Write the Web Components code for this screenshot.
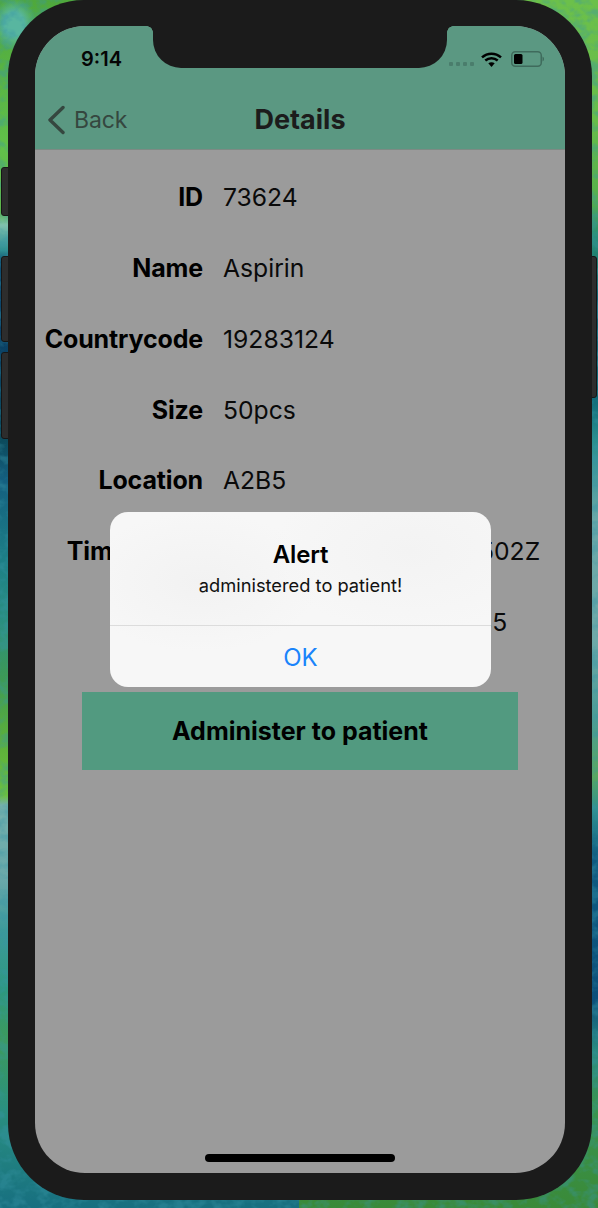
<!DOCTYPE html>
<html><head><meta charset="utf-8"><style>
html,body{margin:0;padding:0;width:598px;height:1208px;overflow:hidden;background:#1f7f80}
body{font-family:Inter,"Liberation Sans",sans-serif}
</style></head><body>
<phone-frame>
  <status-bar slot="top"></status-bar>
  <nav-bar slot="top" back="Back" title="Details"></nav-bar>
  <detail-row label="ID" value="73624"></detail-row>
  <detail-row label="Name" value="Aspirin"></detail-row>
  <detail-row label="Countrycode" value="19283124"></detail-row>
  <detail-row label="Size" value="50pcs"></detail-row>
  <detail-row label="Location" value="A2B5"></detail-row>
  <detail-row label="Timestamp" value="2019-07-24T09:14:41.502Z"></detail-row>
  <detail-row label="" value="A2B5A2B5A2B5A2B5B5"></detail-row>
  <action-button>Administer to patient</action-button>
  <alert-dialog slot="overlay" title="Alert" message="administered to patient!" action="OK"></alert-dialog>
</phone-frame>
<script>
function def(name, html, init){
  customElements.define(name, class extends HTMLElement{
    connectedCallback(){
      if(this.shadowRoot) return;
      const r=this.attachShadow({mode:'open'});
      r.innerHTML=html;
      if(init) init(this,r);
    }
  });
}
def('phone-frame',`<style>
:host{display:block;position:relative;width:598px;height:1208px;overflow:hidden;
 background:
  radial-gradient(22px 26px at 14px 24px,#58b6a0 0,#58b6a0 45%,transparent 100%) no-repeat,
  linear-gradient(180deg,#4fa83c 0,#62c04a 150px,#5cb44a 212px,#7fc0ae 225px,#2f8f90 250px,#0f4f72 262px,#0a3f66 330px,#0c4a5c 440px,#145f80 480px,#1d7f86 560px,#2a8f80 620px,#3e9a54 680px,#5cb03a 740px,#6cc03e 795px,#74b0ac 805px,#6aa9aa 880px,#3d9a9a 930px,#2d9880 990px,#3d9a5c 1040px,#2a9080 1110px,#176f80 1208px) left top/299px 100% no-repeat,
  linear-gradient(180deg,#6cc04a 0,#68bc4a 120px,#58b04a 200px,#2a8f70 235px,#0f6272 300px,#0f6a78 398px,#2a8f90 440px,#6aa8a8 520px,#6fa9a8 640px,#4a9c96 720px,#5aa860 775px,#2f8f90 810px,#0f5a80 860px,#0c4f7a 1000px,#2a8a80 1050px,#3a9450 1105px,#3a8a38 1208px) right top/299px 100% no-repeat}
.wall{position:absolute;inset:0;width:598px;height:1208px;opacity:.4}
.btn{position:absolute;background:#2d2d2d;border:1px solid #161616;box-sizing:border-box}
.l1{left:1px;top:167px;width:9px;height:49px;border-radius:3px 0 0 3px}
.l2{left:1px;top:256px;width:9px;height:86px;border-radius:3px 0 0 3px}
.l3{left:1px;top:352px;width:9px;height:87px;border-radius:3px 0 0 3px}
.r1{right:1px;top:256px;width:9px;height:142px;border-radius:0 3px 3px 0}
.body{position:absolute;left:8px;top:0;width:584px;height:1200px;box-sizing:border-box;padding:26px 27px;background:#1b1b1b;border-radius:76px}
.screen{position:relative;height:1147px;border-radius:50px;overflow:hidden;background:#9b9b9b;display:flex;flex-direction:column}
.content{display:flex;flex-direction:column;padding-top:29.3px}
.notch{position:absolute;left:118px;top:0;width:294px;height:42px;background:#1b1b1b;border-radius:0 0 28px 28px}
.notch:before,.notch:after{content:"";position:absolute;top:0;width:6px;height:6px;background:radial-gradient(circle at 0 100%,transparent 5.5px,#1b1b1b 6px)}
.notch:before{left:-6px}
.notch:after{right:-6px;transform:scaleX(-1)}
.home{position:absolute;left:170px;top:1128px;width:190px;height:8px;border-radius:4px;background:#000}
</style>
<svg class="wall" viewBox="0 0 598 1208" aria-hidden="true"><filter id="m" x="0" y="0" width="100%" height="100%"><feTurbulence type="fractalNoise" baseFrequency=".08 .1" numOctaves="3" seed="7"/><feColorMatrix values="0 0 0 0 .04  0 0 0 0 .3  0 0 0 0 .38  3.500 0 0 0 -1.500"/></filter><rect width="598" height="1208" filter="url(#m)"/></svg>
<div class="btn l1"></div><div class="btn l2"></div><div class="btn l3"></div><div class="btn r1"></div>
<div class="body"><div class="screen">
  <slot name="top"></slot>
  <div class="content"><slot></slot></div>
  <div class="notch"></div>
  <div class="home"></div>
  <slot name="overlay"></slot>
</div></div>`);
def('status-bar',`<style>
:host{display:flex;align-items:flex-start;height:67px;background:#5b9882;position:relative;color:#050505}
.time{margin:21px 0 0 46px;font:600 20px/24px Inter,"Liberation Sans",sans-serif;width:60px;text-align:left}
.right{margin-left:auto;margin-right:21px;display:flex;align-items:center;margin-top:25px}
.dots{display:flex;gap:3px;margin-top:9px;margin-right:7px}
.dots i{width:4px;height:4px;background:#4a7d6c;border-radius:1px;display:block}
.wifi{margin-right:9px}
</style>
<span class="time">9:14</span>
<div class="right">
 <div class="dots"><i></i><i></i><i></i><i></i></div>
 <svg class="wifi" width="21" height="15" viewBox="0 0 21 15"><path d="M1 5.400C6.500.4 14.500.4 20 5.400" fill="none" stroke="#000" stroke-width="2.500"/><path d="M4.300 8.500c3.600-3.100 8.800-3.100 12.400 0" fill="none" stroke="#000" stroke-width="2.500"/><path d="M7.300 11.200c1.900-1.400 4.500-1.400 6.400 0L10.500 15z" fill="#000"/></svg>
 <svg width="33" height="16" viewBox="0 0 33 16"><rect x=".75" y=".75" width="29.500" height="14.500" rx="3.500" fill="none" stroke="#3f6b5c" stroke-width="1.500"/><rect x="3" y="3" width="8.500" height="10" rx="1.500" fill="#000"/><path d="M31.500 5.500c1 .6 1.500 1.500 1.500 2.500s-.5 1.900-1.500 2.500z" fill="#3f6b5c"/></svg>
</div>`);
def('nav-bar',`<style>
:host{display:grid;grid-template-columns:1fr auto 1fr;align-items:center;height:57px;box-sizing:border-box;padding-bottom:2px;background:#5b9882;border-bottom:1px solid #7d8a84;color:#1c1c1c}
.back{display:flex;align-items:center;gap:9px;padding-left:12px;color:#35473f;font:400 23px/30px Inter,"Liberation Sans",sans-serif;letter-spacing:-.1px}
.t{font:700 27px/32px Inter,"Liberation Sans",sans-serif}
</style>
<div class="back"><svg width="18" height="30" viewBox="0 0 18 30"><path d="M16 2.500 3 15l13 12.500" fill="none" stroke="#35473f" stroke-width="3.400" stroke-linecap="round" stroke-linejoin="round"/></svg><span id="b"></span></div>
<div class="t" id="t"></div><div></div>`,(h,r)=>{r.getElementById('b').textContent=h.getAttribute('back');r.getElementById('t').textContent=h.getAttribute('title')});
def('detail-row',`<style>
:host{display:grid;grid-template-columns:168px auto;column-gap:20px;height:70.8px;align-items:start;white-space:nowrap;color:#000}
.l{font:700 25px/36px Inter,"Liberation Sans",sans-serif;text-align:right;letter-spacing:-.15px}
.v{font:400 24.700px/36px Inter,"Liberation Sans",sans-serif;color:#0a0a0a}
</style><div class="l" id="l"></div><div class="v" id="v"></div>`,(h,r)=>{r.getElementById('l').textContent=h.getAttribute('label');r.getElementById('v').textContent=h.getAttribute('value')});
def('action-button',`<style>
:host{display:flex;align-items:center;justify-content:center;width:436px;height:78px;margin:17px 0 0 47px;background:#529a80;color:#000;font:700 25px/30px Inter,"Liberation Sans",sans-serif}
</style><slot></slot>`);
def('alert-dialog',`<style>
:host{position:absolute;left:75px;top:486px;width:381px;height:175px;border-radius:18px;display:flex;flex-direction:column;overflow:hidden;background:radial-gradient(120px 70px at 90px 70px,#f2f2f2,transparent),radial-gradient(140px 80px at 300px 40px,#f3f3f3,transparent),#f7f7f7;color:#000;text-align:center}
.top{height:114px;box-sizing:border-box;padding-top:29px;border-bottom:1px solid #dcdcdc}
.t{font:600 24px/28px Inter,"Liberation Sans",sans-serif;letter-spacing:-.2px}
.m{font:400 18.300px/22px Inter,"Liberation Sans",sans-serif;color:#111;margin-top:5px}
.a{flex:1;display:flex;align-items:center;justify-content:center;padding-top:2px;font:400 24px/30px Inter,"Liberation Sans",sans-serif;color:#1a84fb}
</style><div class="top"><div class="t" id="t"></div><div class="m" id="m"></div></div><div class="a" id="a"></div>`,(h,r)=>{r.getElementById('t').textContent=h.getAttribute('title');r.getElementById('m').textContent=h.getAttribute('message');r.getElementById('a').textContent=h.getAttribute('action')});
</script>
</body></html>
